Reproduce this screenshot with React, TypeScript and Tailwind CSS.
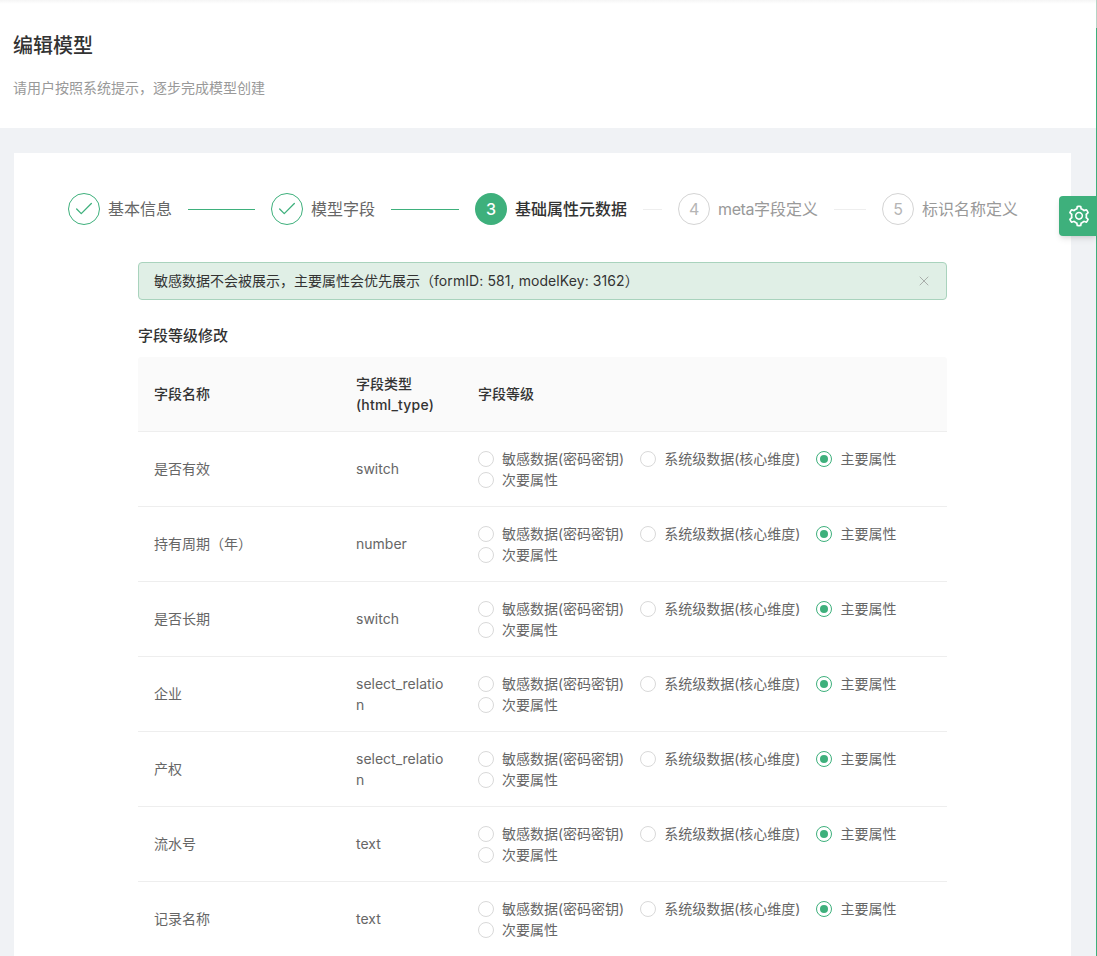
import { Check, X } from "lucide-react"
import { AiOutlineSetting } from "react-icons/ai"

const rows = [
  { name: "是否有效", type: "switch" },
  { name: "持有周期（年）", type: "number" },
  { name: "是否长期", type: "switch" },
  { name: "企业", type: "select_relation" },
  { name: "产权", type: "select_relation" },
  { name: "流水号", type: "text" },
  { name: "记录名称", type: "text" },
]

const levels = ["敏感数据(密码密钥)", "系统级数据(核心维度)", "主要属性", "次要属性"]

function DoneStep({ label }: { label: string }) {
  return (
    <div className="flex items-center gap-2">
      <div className="flex h-8 w-8 items-center justify-center rounded-full border border-[#3eb07c] text-[#3eb07c]">
        <Check size={22} strokeWidth={1.4} />
      </div>
      <span className="text-base text-[#666666]">{label}</span>
    </div>
  )
}

function TodoStep({ n, label }: { n: number; label: React.ReactNode }) {
  return (
    <div className="flex items-center gap-2">
      <div className="flex h-8 w-8 items-center justify-center rounded-full border border-[#d4d4d4] text-base text-[#b5b5b5]">{n}</div>
      <span className="text-base text-[#999999]">{label}</span>
    </div>
  )
}

function Radio({ label, checked }: { label: string; checked: boolean }) {
  return (
    <label className="mr-4 flex h-[21px] items-center gap-2 text-sm text-[#666666]">
      {checked ? (
        <span className="flex h-4 w-4 items-center justify-center rounded-full border border-[#3eb07c]">
          <span className="h-2 w-2 rounded-full bg-[#3eb07c]" />
        </span>
      ) : (
        <span className="h-4 w-4 rounded-full border border-[#d9d9d9]" />
      )}
      <span>{label}</span>
    </label>
  )
}

export default function App() {
  return (
    <div
      className="relative h-[956px] overflow-hidden bg-[#f0f2f5] text-[#333333]"
      style={{ fontFamily: 'Inter, "Noto Sans CJK SC", sans-serif' }}
    >
      <div className="h-[128px] bg-white bg-gradient-to-b from-[#f5f5f5] to-white to-[4px] px-[13px] pt-[33px]">
        <h1 className="text-xl leading-[26px] font-medium text-[#333333]">编辑模型</h1>
        <p className="mt-[18px] text-sm leading-[22px] text-[#999999]">请用户按照系统提示，逐步完成模型创建</p>
      </div>

      <div className="mx-[14px] mt-[25px] w-[1057px] bg-white">
        {/* steps */}
        <div className="flex items-center pt-10 pl-[54px]">
          <DoneStep label="基本信息" />
          <div className="mx-4 h-px w-[67px] bg-[#3eb07c]" />
          <DoneStep label="模型字段" />
          <div className="mx-4 h-px w-[68px] bg-[#3eb07c]" />
          <div className="flex items-center gap-2">
            <div className="flex h-8 w-8 items-center justify-center rounded-full bg-[#3eb07c] text-base font-medium text-white">3</div>
            <span className="text-base font-medium text-[#333333]">基础属性元数据</span>
          </div>
          <div className="mx-4 h-px w-[19px] bg-[#eeeeee]" />
          <TodoStep
            n={4}
            label={
              <>
                <span className="tracking-[-0.4px]">meta</span>字段定义
              </>
            }
          />
          <div className="mx-4 h-px w-[32px] bg-[#eeeeee]" />
          <TodoStep n={5} label="标识名称定义" />
        </div>

        <div className="mx-[124px] mt-[37px] w-[809px]">
          {/* alert */}
          <div className="flex h-[38px] items-center justify-between rounded-[4px] border border-[#a9d3bd] bg-[#e0efe6] pr-[14px] pl-[15px] text-sm text-[#333333]">
            <span>
              敏感数据不会被展示，主要属性会优先展示（<span className="tracking-[0.08px]">formID: 581, modelKey: 3162</span>）
            </span>
            <X size={16} strokeWidth={1} className="text-[#8c8c8c]" />
          </div>

          <h2 className="mt-[25px] text-[15px] leading-[22px] font-medium text-[#333333]">字段等级修改</h2>

          <table className="mt-[10px] w-[809px] table-fixed border-collapse text-sm">
            <colgroup>
              <col className="w-[202px]" />
              <col className="w-[122px]" />
              <col className="w-[485px]" />
            </colgroup>
            <thead>
              <tr className="h-[74px] border-b border-[#eeeeee] bg-[#fafafa] text-left leading-[21px] text-[#333333]">
                <th className="rounded-tl-[3px] px-4 font-medium">字段名称</th>
                <th className="px-4 font-medium">
                  字段类型
                  <br />
                  <span className="tracking-[0.2px]">(html_type)</span>
                </th>
                <th className="rounded-tr-[3px] px-4 font-medium">字段等级</th>
              </tr>
            </thead>
            <tbody>
              {rows.map((row) => (
                <tr key={row.name} className="h-[75px] border-b border-[#eeeeee] leading-[21px] text-[#666666]">
                  <td className="px-4">{row.name}</td>
                  <td className="px-4 break-all">{row.type}</td>
                  <td className="px-4">
                    <div className="flex flex-wrap pt-[2px]">
                      {levels.map((level, i) => (
                        <Radio key={level} label={level} checked={i === 2} />
                      ))}
                    </div>
                  </td>
                </tr>
              ))}
            </tbody>
          </table>
        </div>
      </div>

      {/* right edge line + floating settings */}
      <div className="absolute top-0 right-0 h-7 w-px bg-[#b5d4c6]" />
      <div className="absolute top-7 right-0 bottom-0 w-px bg-[#3eb07c]" />
      <div className="absolute top-[196px] right-0 flex h-10 w-[38px] items-center justify-center rounded-l-[4px] bg-[#3eb07c] pl-px text-white shadow-md">
        <AiOutlineSetting size={24} />
      </div>
    </div>
  )
}
